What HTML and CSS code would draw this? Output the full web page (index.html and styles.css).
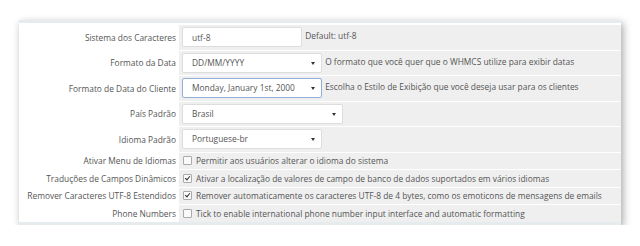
FILE: index.html
```html
<!DOCTYPE html>
<html lang="pt-BR">
<head>
    <meta charset="UTF-8">
    <meta name="viewport" content="width=device-width, initial-scale=1.0">
    <title>Configurações Gerais</title>
    <link rel="stylesheet" href="styles.css">
</head>
<body>
    <div class="panel">
        <table class="form-table">
            <tr>
                <td class="label">Sistema dos Caracteres</td>
                <td class="field"><input type="text" class="input-sm" value="utf-8"> Default: utf-8</td>
            </tr>
            <tr>
                <td class="label">Formato da Data</td>
                <td class="field">
                    <div class="select">DD/MM/YYYY</div> O formato que você quer que o WHMCS utilize para exibir datas
                </td>
            </tr>
            <tr>
                <td class="label">Formato de Data do Cliente</td>
                <td class="field">
                    <div class="select focus">Monday, January 1st, 2000</div> Escolha o Estilo de Exibição que você deseja usar para os clientes
                </td>
            </tr>
            <tr>
                <td class="label">País Padrão</td>
                <td class="field"><div class="select wide">Brasil</div></td>
            </tr>
            <tr>
                <td class="label">Idioma Padrão</td>
                <td class="field"><div class="select">Portuguese-br</div></td>
            </tr>
            <tr class="check-row">
                <td class="label">Ativar Menu de Idiomas</td>
                <td class="field"><label><span class="box"></span>Permitir aos usuários alterar o idioma do sistema</label></td>
            </tr>
            <tr class="check-row">
                <td class="label">Traduções de Campos Dinâmicos</td>
                <td class="field"><label><span class="box checked"></span>Ativar a localização de valores de campo de banco de dados suportados em vários idiomas</label></td>
            </tr>
            <tr class="check-row">
                <td class="label">Remover Caracteres UTF-8 Estendidos</td>
                <td class="field"><label><span class="box checked"></span>Remover automaticamente os caracteres UTF-8 de 4 bytes, como os emoticons de mensagens de emails</label></td>
            </tr>
            <tr class="check-row">
                <td class="label">Phone Numbers</td>
                <td class="field"><label><span class="box"></span>Tick to enable international phone number input interface and automatic formatting</label></td>
            </tr>
        </table>
    </div>
</body>
</html>
```
FILE: styles.css
```css
body {
	margin: 0;
	background: #fff;
	font-family: "Open Sans", sans-serif;
	font-size: 8.4px;
	color: #555;
}

.panel {
	width: 602px;
	margin: 20px 0 0 19px;
	border-top: 3px solid #e6ebee;
	border-bottom: 3px solid #e6ebee;
	padding-top: 2px;
	background: #fff;
	box-shadow: 2px 3px 8px rgba(0, 0, 0, 0.35);
}

.form-table {
	width: 100%;
	border-collapse: collapse;
}

.form-table td {
	padding: 0;
	border-bottom: 1px solid #fff;
	height: 24.5px;
	vertical-align: middle;
}

.form-table tr:last-child td {
	border-bottom: none;
}

.form-table .label {
	width: 157px;
	text-align: right;
	padding-right: 3px;
	white-space: nowrap;
}

.form-table .field {
	background: #efefef;
	padding-left: 3px;
	white-space: nowrap;
}

.check-row td {
	height: 16.5px;
}

.input-sm, .select {
	display: inline-block;
	vertical-align: middle;
	box-sizing: border-box;
	height: 20px;
	line-height: 18px;
	padding: 0 9px;
	border: 1px solid #ddd;
	border-radius: 2px;
	background: #fff;
	font-family: "Open Sans", sans-serif;
	font-size: 8.4px;
	color: #555;
	margin-right: 1px;
}

.input-sm {
	width: 120px;
}

.select {
	position: relative;
	width: 140px;
}

.select::after {
	content: "";
	position: absolute;
	right: 6px;
	top: 8px;
	border-left: 2px solid transparent;
	border-right: 2px solid transparent;
	border-top: 3px solid #333;
}

.select.wide {
	width: 161px;
}

.select.focus {
	border-color: #8fb0d8;
}

.field label {
	display: flex;
	align-items: center;
}

.box {
	width: 7px;
	height: 7px;
	border: 1px solid #aaa;
	border-radius: 1px;
	background: #fafafa;
	margin: 0 4px 0 1px;
	position: relative;
}

.box.checked::after {
	content: "";
	position: absolute;
	left: 2px;
	top: 0;
	width: 2px;
	height: 4px;
	border-right: 1px solid #333;
	border-bottom: 1px solid #333;
	transform: rotate(40deg);
}
```
